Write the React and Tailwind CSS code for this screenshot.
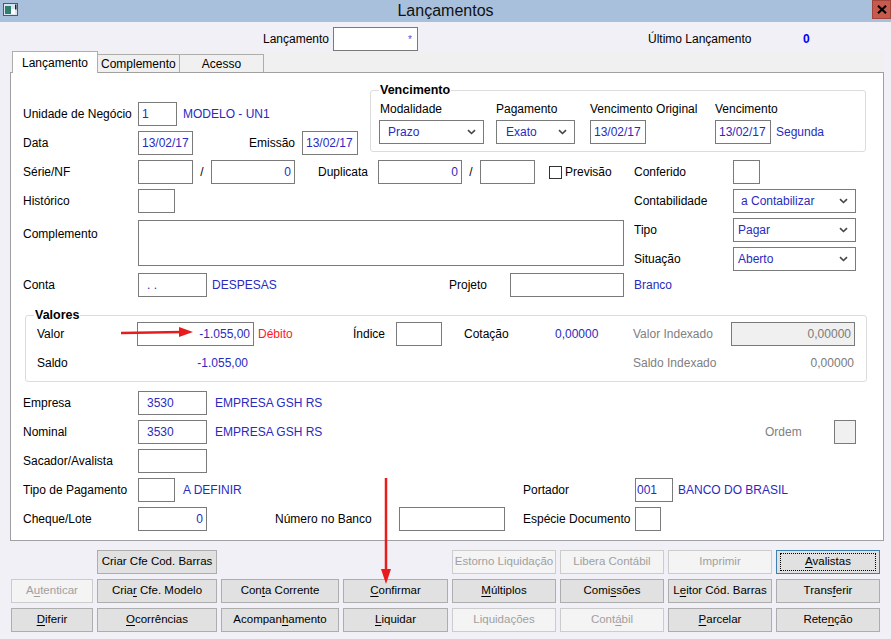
import React from 'react';

const blue = 'text-[#2a2abf]';

function Chevron() {
  return (
    <svg width="9" height="6" viewBox="0 0 9 6" className="shrink-0">
      <path d="M1 1.2l3.5 3.3L8 1.2" fill="none" stroke="#444" strokeWidth="1.6" />
    </svg>
  );
}

function Box({ className = '', bg = 'bg-white', right = false, children }) {
  return (
    <div
      className={`flex h-[24px] shrink-0 items-center border border-[#7a7a7a] px-[3px] ${bg} ${blue} ${
        right ? 'justify-end' : ''
      } ${className}`}
    >
      {children}
    </div>
  );
}

function Select({ className = '', value }) {
  return (
    <div
      className={`flex h-[24px] shrink-0 items-center justify-between border border-[#7a7a7a] bg-white pr-[7px] ${blue} ${className}`}
    >
      <span>{value}</span>
      <Chevron />
    </div>
  );
}

function Lbl({ className = 'w-[115px]', children }) {
  return <span className={`shrink-0 whitespace-nowrap ${className}`}>{children}</span>;
}

// "&" marks the mnemonic letter
function Btn({ label, disabled = false, focus = false, className = '' }) {
  const [a, b] = label.split('&');
  const text = (
    <span className="whitespace-pre">
      {b === undefined ? (
        label
      ) : (
        <>
          {a}
          <span className="underline underline-offset-[2px]">{b[0]}</span>
          {b.slice(1)}
        </>
      )}
    </span>
  );
  let look = 'border-[#adadad] bg-[#e1e1e1] text-black';
  if (disabled) look = 'border-[#cccccc] bg-[#f4f4f4] text-[#a0a0a0]';
  if (focus) look = 'border-[#3c7fb1] bg-[#e1e1e1] text-black';
  return (
    <div className={`flex h-[24px] items-center justify-center border text-[11.5px] whitespace-nowrap ${look} ${className}`}>
      {focus ? (
        <span className="flex h-[18px] w-[calc(100%-6px)] items-center justify-center border border-dotted border-black">
          {text}
        </span>
      ) : (
        text
      )}
    </div>
  );
}

function AppIcon() {
  return (
    <svg width="15" height="13" viewBox="0 0 15 13">
      <rect x="0.5" y="0.5" width="14" height="12" fill="#d8e4ef" stroke="#4a5a6a" />
      <rect x="2" y="3" width="6" height="8" fill="#2f7f6f" />
      <rect x="8" y="6" width="4" height="5" fill="#ffffff" />
      <rect x="12" y="1.5" width="1.5" height="5" fill="#222" />
    </svg>
  );
}

export default function App() {
  return (
    <div className="relative h-[639px] w-[891px] overflow-hidden bg-[#f0f0f6] font-['Liberation_Sans',Arial,sans-serif] text-[12px] text-black">
      {/* title bar */}
      <div className="flex h-[22px] items-start bg-[#a8c0db]">
        <div className="w-[40px] pl-[3px] pt-[3px]">
          <AppIcon />
        </div>
        <div className="flex-1 pt-[1px] text-center text-[16px] leading-[20px] text-[#111]">Lançamentos</div>
        <div className="flex w-[40px] justify-end">
          <div className="flex h-[19px] w-[19px] items-center justify-center border border-[#a0463c] bg-[#c75a4c]">
            <svg width="10" height="9" viewBox="0 0 10 9">
              <path d="M1 0.8l8 7.4M9 0.8l-8 7.4" stroke="#000" strokeWidth="2.2" />
            </svg>
          </div>
        </div>
      </div>

      {/* header row */}
      <div className="flex h-[29px] items-end pl-[263px]">
        <Lbl className="flex h-[24px] w-[70px] items-center">Lançamento</Lbl>
        <Box className="w-[85px] justify-end pr-[5px]">
          <span className="text-[10px] text-[#3a5ad8]">*</span>
        </Box>
        <Lbl className="ml-[230px] flex h-[24px] w-[155px] items-center">Último Lançamento</Lbl>
        <span className="flex h-[24px] items-center font-bold text-[#0000ff]">0</span>
      </div>

      {/* tabs */}
      <div className="ml-[10px] flex h-[21px] w-[874px] items-end bg-[#f0f0f0] pl-[2px]">
        <div className="relative z-10 -mb-[1px] flex h-[22px] w-[86px] items-center border border-b-0 border-[#adadad] bg-white pl-[9px]">
          Lançamento
        </div>
        <div className="flex h-[18px] w-[82px] items-center border border-l-0 border-b-0 border-[#adadad] pl-[3px]">
          Complemento
        </div>
        <div className="flex h-[18px] w-[84px] items-center justify-center border border-l-0 border-b-0 border-[#adadad]">
          Acesso
        </div>
      </div>

      {/* panel */}
      <div className="ml-[10px] h-[469px] w-[874px] border border-[#a0a0a0] bg-white pl-[12px] pt-[10px]">
        <div className="flex items-start">
          <div className="w-[347px] shrink-0 pt-[19px]">
            <div className="flex h-[24px] items-center">
              <Lbl>Unidade de Negócio</Lbl>
              <Box className="w-[39px]">1</Box>
              <span className={`ml-[6px] ${blue}`}>MODELO - UN1</span>
            </div>
            <div className="mt-[5px] flex h-[24px] items-center">
              <Lbl>Data</Lbl>
              <Box className="w-[55px]">13/02/17</Box>
              <Lbl className="ml-[56px] w-[53px]">Emissão</Lbl>
              <Box className="w-[56px]">13/02/17</Box>
            </div>
          </div>
          <fieldset className="w-[496px] shrink-0 rounded-[3px] border border-[#dcdcdc] pb-[7px] pl-[8px]">
            <legend className="px-[1px] text-[12.5px] leading-[14px] font-bold">Vencimento</legend>
            <div className="mt-[3px] flex">
              <div className="w-[117px]">
                <div className="h-[16px] pl-[1px]">Modalidade</div>
                <Select className="mt-[4px] w-[105px] pl-[8px]" value="Prazo" />
              </div>
              <div className="w-[94px]">
                <div className="h-[16px]">Pagamento</div>
                <Select className="mt-[4px] w-[79px] pl-[9px]" value="Exato" />
              </div>
              <div className="w-[125px]">
                <div className="h-[16px]">Vencimento Original</div>
                <Box className="mt-[4px] w-[56px]">13/02/17</Box>
              </div>
              <div>
                <div className="h-[16px]">Vencimento</div>
                <div className="mt-[4px] flex items-center">
                  <Box className="w-[56px]">13/02/17</Box>
                  <span className={`ml-[5px] ${blue}`}>Segunda</span>
                </div>
              </div>
            </div>
          </fieldset>
        </div>

        {/* Série/NF */}
        <div className="mt-[5px] flex h-[24px] items-center">
          <div className="flex w-[611px] shrink-0 items-center">
            <Lbl>Série/NF</Lbl>
            <Box className="w-[55px]" />
            <span className="w-[18px] text-center">/</span>
            <Box className="w-[84px]" right>0</Box>
            <Lbl className="ml-[23px] w-[60px]">Duplicata</Lbl>
            <Box className="w-[84px]" right>0</Box>
            <span className="w-[18px] text-center">/</span>
            <Box className="w-[55px]" />
            <span className="ml-[14px] h-[13px] w-[13px] border border-[#333] bg-white" />
            <span className="ml-[3px]">Previsão</span>
          </div>
          <Lbl className="w-[99px]">Conferido</Lbl>
          <Box className="w-[27px]" />
        </div>

        {/* Histórico */}
        <div className="mt-[5px] flex h-[24px] items-center">
          <div className="flex w-[611px] shrink-0 items-center">
            <Lbl>Histórico</Lbl>
            <Box className="w-[37px]" />
          </div>
          <Lbl className="w-[99px]">Contabilidade</Lbl>
          <Select className="w-[123px] pl-[7px]" value="a Contabilizar" />
        </div>

        {/* Complemento / Tipo / Situação */}
        <div className="mt-[5px] flex items-start">
          <div className="flex w-[611px] shrink-0 items-start">
            <Lbl className="w-[115px] pt-[7px]">Complemento</Lbl>
            <div className="mt-[2px] h-[46px] w-[486px] border border-[#7a7a7a] bg-white" />
          </div>
          <div className="flex flex-col gap-[5px]">
            <div className="flex h-[24px] items-center">
              <Lbl className="w-[99px]">Tipo</Lbl>
              <Select className="w-[123px] pl-[4px]" value="Pagar" />
            </div>
            <div className="flex h-[24px] items-center">
              <Lbl className="w-[99px]">Situação</Lbl>
              <Select className="w-[123px] pl-[4px]" value="Aberto" />
            </div>
          </div>
        </div>

        {/* Conta */}
        <div className="mt-[2px] flex h-[24px] items-center">
          <div className="flex w-[611px] shrink-0 items-center">
            <Lbl>Conta</Lbl>
            <Box className="w-[69px] pl-[8px]">. .</Box>
            <span className={`ml-[5px] w-[237px] ${blue}`}>DESPESAS</span>
            <Lbl className="w-[61px]">Projeto</Lbl>
            <Box className="w-[114px]" />
          </div>
          <span className={blue}>Branco</span>
        </div>

        {/* Valores */}
        <fieldset className="mt-[11px] ml-[2px] w-[842px] rounded-[3px] border border-[#dcdcdc] pb-[6px] pl-[11px]">
          <legend className="-ml-[3px] px-[1px] text-[12.5px] leading-[14px] font-bold">Valores</legend>
          <div className="flex h-[24px] items-center">
            <Lbl className="w-[100px]">Valor</Lbl>
            <Box className="w-[117px]" right>-1.055,00</Box>
            <span className="ml-[4px] w-[95px] shrink-0 text-[#ff1a1a]">Débito</span>
            <Lbl className="w-[43px]">Índice</Lbl>
            <Box className="w-[46px]" />
            <Lbl className="ml-[22px] w-[91px]">Cotação</Lbl>
            <span className={`w-[78px] shrink-0 ${blue}`}>0,00000</span>
            <Lbl className="w-[98px] text-[#808080]">Valor Indexado</Lbl>
            <Box className="w-[124px]" bg="bg-[#f0f0f0]" right>
              <span className="text-[#7a7a7a]">0,00000</span>
            </Box>
          </div>
          <div className="mt-[5px] flex h-[24px] items-center">
            <Lbl className="w-[100px]">Saldo</Lbl>
            <span className={`w-[111px] shrink-0 text-right ${blue}`}>-1.055,00</span>
            <span className="w-[385px] shrink-0" />
            <Lbl className="w-[98px] text-[#808080]">Saldo Indexado</Lbl>
            <span className="w-[123px] shrink-0 text-right text-[#7a7a7a]">0,00000</span>
          </div>
        </fieldset>

        {/* Empresa */}
        <div className="mt-[9px] flex h-[24px] items-center">
          <Lbl>Empresa</Lbl>
          <Box className="w-[69px] pl-[8px]">3530</Box>
          <span className={`ml-[8px] ${blue}`}>EMPRESA GSH RS</span>
        </div>

        {/* Nominal */}
        <div className="mt-[5px] flex h-[24px] items-center">
          <div className="flex w-[611px] shrink-0 items-center">
            <Lbl>Nominal</Lbl>
            <Box className="w-[69px] pl-[8px]">3530</Box>
            <span className={`ml-[8px] ${blue}`}>EMPRESA GSH RS</span>
          </div>
          <Lbl className="ml-[131px] w-[69px] text-[#808080]">Ordem</Lbl>
          <Box className="w-[22px]" bg="bg-[#f0f0f0]" />
        </div>

        {/* Sacador */}
        <div className="mt-[5px] flex h-[24px] items-center">
          <Lbl>Sacador/Avalista</Lbl>
          <Box className="w-[69px]" />
        </div>

        {/* Tipo de Pagamento */}
        <div className="mt-[5px] flex h-[24px] items-center">
          <Lbl>Tipo de Pagamento</Lbl>
          <Box className="w-[37px]" />
          <span className={`ml-[8px] w-[340px] shrink-0 ${blue}`}>A DEFINIR</span>
          <Lbl className="w-[112px]">Portador</Lbl>
          <Box className="w-[38px] pl-[1px]">001</Box>
          <span className={`ml-[5px] ${blue}`}>BANCO DO BRASIL</span>
        </div>

        {/* Cheque/Lote */}
        <div className="mt-[5px] flex h-[24px] items-center">
          <Lbl>Cheque/Lote</Lbl>
          <Box className="w-[69px]" right>0</Box>
          <span className="w-[68px] shrink-0" />
          <Lbl className="w-[124px]">Número no Banco</Lbl>
          <Box className="w-[106px]" />
          <span className="w-[18px] shrink-0" />
          <Lbl className="w-[112px]">Espécie Documento</Lbl>
          <Box className="w-[26px]" />
        </div>
      </div>

      {/* buttons */}
      <div className="mt-[9px] ml-[11px] grid grid-cols-[82px_120px_118px_105px_104px_104px_104px_104px] gap-x-[4px] gap-y-[5px]">
        <Btn className="col-start-2" label="Criar Cfe Cod. Barras" />
        <Btn className="col-start-5" label="Estorno Liquidação" disabled />
        <Btn label="Libera Contábil" disabled />
        <Btn label="Imprimir" disabled />
        <Btn label="&Avalistas" focus />

        <Btn label="A&utenticar" disabled />
        <Btn label="Cria&r Cfe. Modelo" />
        <Btn label="Con&ta Corrente" />
        <Btn label="&Confirmar" />
        <Btn label="&Múltiplos" />
        <Btn label="Comi&ssões" />
        <Btn label="L&eitor Cód. Barras" />
        <Btn label="Trans&ferir" />

        <Btn label="&Diferir" />
        <Btn label="&Ocorrências" />
        <Btn label="Acompan&hamento" />
        <Btn label="&Liquidar" />
        <Btn label="Liquidações" disabled />
        <Btn label="Cont&ábil" disabled />
        <Btn label="&Parcelar" />
        <Btn label="Rete&nção" />
      </div>

      {/* red annotation arrows */}
      <svg className="pointer-events-none absolute top-0 left-0" width="891" height="639">
        <path d="M121 333 L182 332" stroke="#e81c1c" strokeWidth="2.5" />
        <path d="M179 327 L193 332 L179 337 Z" fill="#e81c1c" />
        <path d="M386 478 L386 572" stroke="#e81c1c" strokeWidth="2.5" />
        <path d="M381 569 L386 584 L391 569 Z" fill="#e81c1c" />
      </svg>
    </div>
  );
}
